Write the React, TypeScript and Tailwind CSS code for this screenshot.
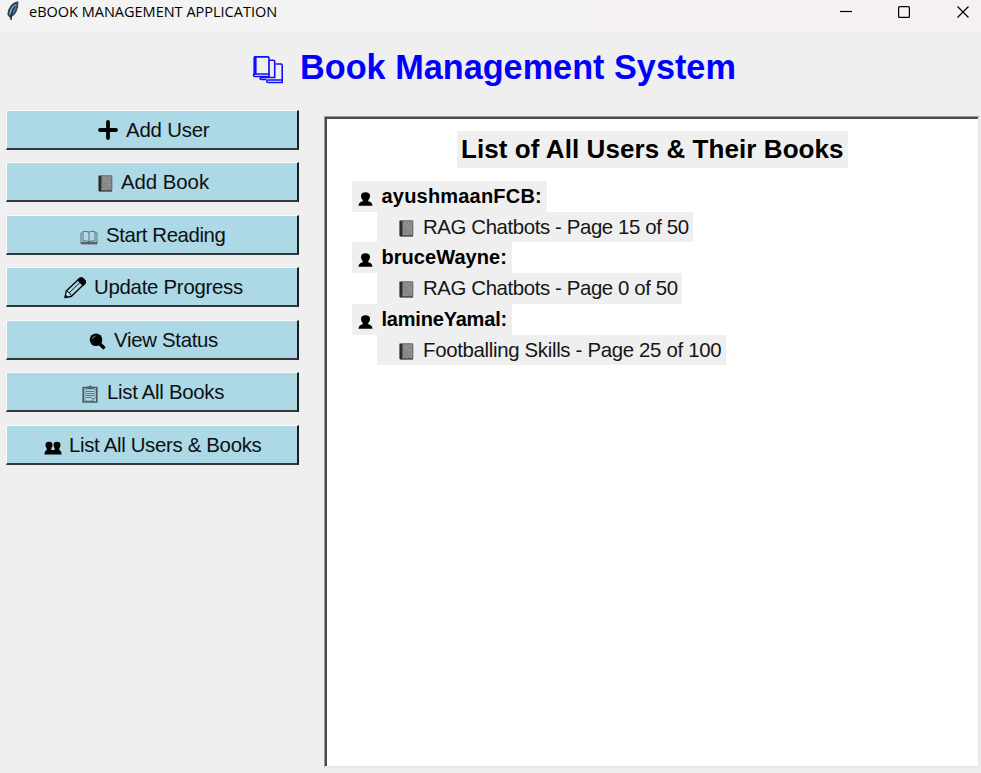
import type { ReactNode } from "react";

function Feather() {
  return (
    <svg width="14" height="20" viewBox="0 0 14 20" fill="none">
      <path d="M11.500 1.300C6.500 2 2.200 8 2.200 13.500l2 2.500C9 14 11.800 8 11.500 1.300Z" fill="#4b86c8" stroke="#3a3f46" strokeWidth="1.7" />
      <path d="M9 5C7 8 5 12 5 19" stroke="#252a30" strokeWidth="1.5" />
      <path d="M8.500 4.500C6.500 6.500 5 9 4.300 12" stroke="#a8d0f4" strokeWidth=".8" />
    </svg>
  );
}

function Stack() {
  return (
    <svg width="32" height="29" viewBox="0 0 32 29" fill="none" stroke="#1010ff" strokeWidth="1.7">
      <path d="M2 1.800h13.500q1.500 0 1.500 1.500V19H3q-1.500 0-1.500 1.200T3 21.500h14V19" />
      <path d="M3 2v17.500" strokeWidth="3.200" />
      <path d="M17.500 5.200h4q1.200 0 1.200 1.200V22.500H9.500q-1.500 0-1.500 1t1.500 1h5" strokeWidth="1.600" />
      <path d="M23.500 9h5.200q1.500 0 1.500 1.500V25H16q-1.200 0-1.200 1.300T16 27.500h14.200V25" strokeWidth="1.600" />
    </svg>
  );
}

function Plus() {
  return (
    <svg width="20" height="20" viewBox="0 0 20 20" stroke="#000" strokeWidth="3.8" strokeLinecap="round">
      <path d="M10 2v16M2 10h16" />
    </svg>
  );
}

function Notebook() {
  return (
    <svg width="15" height="17" viewBox="0 0 15 17" fill="none">
      <path d="M.8.8h13v15H.8Z" fill="#999" stroke="#606060" />
      <path d="M4 2l10 12M4 5l8 10M4 8l6 7M7 1.500l7 8.500M10 1.500l4 5M4 11l3 4" stroke="#666" strokeWidth=".8" />
      <path d="M2.200 1v15" stroke="#2c2c2c" strokeWidth="2.600" />
      <path d="M1 16h13" stroke="#333" />
    </svg>
  );
}

function OpenBook() {
  return (
    <svg width="18" height="15" viewBox="0 0 18 15" fill="none" stroke="#4b5d63">
      <path d="M9 2Q6 1 3 1.500v9.500Q6 10.500 9 11.500q3-1 6-.5V1.500Q12 1 9 2Zm0 0v10" strokeWidth=".8" />
      <path d="M2.500 3H1v11h16V3h-1.500" strokeWidth=".8" />
      <path d="M1 12.800h7l1 .7 1-.7h7" strokeWidth="1.800" />
    </svg>
  );
}

function Pencil() {
  return (
    <svg width="23" height="23" viewBox="0 0 23 23" fill="none" stroke="#000" strokeWidth="1.300" strokeLinejoin="round">
      <path d="M1 21.500l1.200-6.500L15.500 2.500q1.800-1.300 3.500.3l1.500 1.500q1.600 1.700.2 3.200L7.500 20.300Z" />
      <path d="M14 4L15.500 2.500q1.800-1.300 3.500.3l1.500 1.500q1.600 1.700.2 3.200L19 9.300Z" fill="#000" />
      <path d="M2.200 15q4.300.8 5.300 5.300M5 17L16.500 6M1 21.500l.5-2.500 2 1.900Z" strokeWidth=".9" />
    </svg>
  );
}

function Magnifier() {
  return (
    <svg width="17" height="17" viewBox="0 0 17 17">
      <circle cx="7" cy="6.700" r="6.300" fill="#000" />
      <path d="M3.500 6q.4-2.500 3-3" stroke="#6f8b94" strokeWidth="1.200" fill="none" />
      <path d="M10 10l5.500 5.500" stroke="#000" strokeWidth="3.400" />
    </svg>
  );
}

function Clipboard() {
  return (
    <svg width="16" height="18" viewBox="0 0 16 18" fill="none" stroke="#4a5b62">
      <path d="M1.200 2.500h13.600v14.500H1.200Z" strokeWidth="1.600" />
      <path d="M3 4h10v9.500L10.500 16H3ZM10.500 16v-2.500H13" strokeWidth=".6" />
      <path d="M5 3.500V2h2L8 .5 9 2h2v1.500Z" fill="#53646c" strokeWidth=".8" />
      <path d="M4 6.500h8M4 8.500h8M4 10.500h8M4 12.500h6" strokeWidth=".8" />
    </svg>
  );
}

function People() {
  return (
    <svg width="18" height="14" viewBox="0 0 18 14" fill="#000">
      <path d="M1.500 4Q1.500.8 5 .8T8.500 4Q8.500 6 7.300 7.300V9h3.400V7.300Q9.500 6 9.500 4 9.500.8 13 .8T16.500 4q0 2-1.200 3.300V9.300q2.200.5 2.200 4.200H.5q0-3.700 2.200-4.200v-2Q1.500 6 1.500 4Z" />
    </svg>
  );
}

function Person() {
  return (
    <svg width="15" height="14" viewBox="0 0 15 14" fill="#000">
      <path d="M3 4Q3 .3 7.500.3T12 4q0 2.800-1.800 4.200v1q4 .7 4.300 4.500H.5q.3-3.800 4.300-4.500v-1Q3 6.800 3 4Z" />
    </svg>
  );
}

type Item = { label: string; icon: ReactNode; iconBox: string; text: string };

const actions: Item[] = [
  { label: "Add User", icon: <Plus />, iconBox: "ml-[90px] w-[28px]", text: "tracking-[-0.2px]" },
  { label: "Add Book", icon: <Notebook />, iconBox: "ml-[90px] w-[23px] pt-[3px]", text: "tracking-[-0.05px]" },
  { label: "Start Reading", icon: <OpenBook />, iconBox: "ml-[72px] w-[26px] pt-[5px]", text: "tracking-[-0.4px]" },
  { label: "Update Progress", icon: <Pencil />, iconBox: "ml-[56px] w-[30px]", text: "tracking-[-0.27px]" },
  { label: "View Status", icon: <Magnifier />, iconBox: "ml-[81px] w-[25px] pt-[4px]", text: "tracking-[-0.3px]" },
  { label: "List All Books", icon: <Clipboard />, iconBox: "ml-[74px] w-[25px] pt-[3px]", text: "tracking-[-0.3px]" },
  { label: "List All Users & Books", icon: <People />, iconBox: "ml-[36px] w-[25px] pt-[6px]", text: "tracking-[-0.32px]" },
];

const users = [
  { name: "ayushmaanFCB:", nameBox: "w-[195px]", nameText: "tracking-[0.2px]", book: "RAG Chatbots - Page 15 of 50", bookBox: "w-[316px]", bookText: "tracking-[-0.39px]" },
  { name: "bruceWayne:", nameBox: "w-[160px]", nameText: "tracking-[0.05px]", book: "RAG Chatbots - Page 0 of 50", bookBox: "w-[305px]", bookText: "tracking-[-0.39px]" },
  { name: "lamineYamal:", nameBox: "w-[160px]", nameText: "tracking-[-0.2px]", book: "Footballing Skills - Page 25 of 100", bookBox: "w-[349px]", bookText: "tracking-[-0.32px]" },
];

export default function App() {
  return (
    <div className="flex h-[773px] w-[981px] flex-col overflow-hidden bg-[#efefef] font-['Liberation_Sans',Arial,sans-serif] text-black">
      <header className="flex h-[31px] shrink-0 bg-linear-to-r from-[#f3f3f3] from-30% to-[#f5f0f4] to-75%">
        <div className="ml-[6px] w-[23px] pt-[1px]"><Feather /></div>
        <div className="pt-[2px] font-['Open_Sans','Noto_Sans',sans-serif] text-[14.5px] leading-[20px] whitespace-nowrap">eBOOK MANAGEMENT APPLICATION</div>
        <svg className="mt-[5px] mr-[11px] ml-auto" width="130" height="14" viewBox="0 0 130 14" fill="none" stroke="#000" strokeWidth="1.2">
          <path d="M0 6.500h12" />
          <rect x="58.600" y="1.600" width="10.800" height="10.800" rx="1" />
          <path d="M117.500 1.500l11 11M128.500 1.500l-11 11" />
        </svg>
      </header>
      <div className="flex h-[79px] shrink-0">
        <div className="mt-[24px] ml-[252px] w-[48px]"><Stack /></div>
        <h1 className="mt-[16px] text-[34.25px] leading-[40px] font-bold whitespace-nowrap text-[#0000ff]">Book Management System</h1>
      </div>
      <main className="flex min-h-0 flex-1">
        <nav className="ml-[6px] flex h-[354.6px] w-[293px] flex-col justify-between">
          {actions.map((a) => (
            <button key={a.label} className="flex h-[40px] items-stretch border-t border-r-2 border-b-2 border-l border-t-[#f8fcfd] border-r-[#1b1f21] border-b-[#30383b] border-l-[#f8fcfd] bg-[#add8e6] pt-px pl-px text-left">
              <span className={`flex shrink-0 items-center ${a.iconBox}`}>{a.icon}</span>
              <span className={`text-[20.4px] leading-[36px] whitespace-nowrap text-[#0c1012] ${a.text}`}>{a.label}</span>
            </button>
          ))}
        </nav>
        <section className="mt-[6px] ml-[25px] h-[652px] w-[656px] border-t border-r-2 border-b-2 border-l border-t-[#999] border-r-[#e8e8e8] border-b-[#e8e8e8] border-l-[#999]">
          <div className="h-full border-t-2 border-l-2 border-[#4b4b4b] bg-white">
            <h2 className="mt-[12px] ml-[130px] h-[37px] w-[391px] bg-[#efefef] pl-[4px] text-[26px] leading-[37px] font-bold tracking-[0.07px] whitespace-nowrap">List of All Users &amp; Their Books</h2>
            <ul className="mt-[13px] ml-[25px]">
              {users.map((u) => (
                <li key={u.name} className="h-[61.300px]">
                  <div className={`flex h-[31px] bg-[#efefef] ${u.nameBox}`}>
                    <span className="w-[29.500px] pt-[11px] pl-[6px]"><Person /></span>
                    <span className={`text-[20px] leading-[30px] font-bold whitespace-nowrap ${u.nameText}`}>{u.name}</span>
                  </div>
                  <div className={`ml-[25px] flex h-[30.300px] bg-[#efefef] ${u.bookBox}`}>
                    <span className="w-[46px] pt-[8px] pl-[22px]"><Notebook /></span>
                    <span className={`text-[20.4px] leading-[31px] whitespace-nowrap text-[#161616] ${u.bookText}`}>{u.book}</span>
                  </div>
                </li>
              ))}
            </ul>
          </div>
        </section>
      </main>
    </div>
  );
}
